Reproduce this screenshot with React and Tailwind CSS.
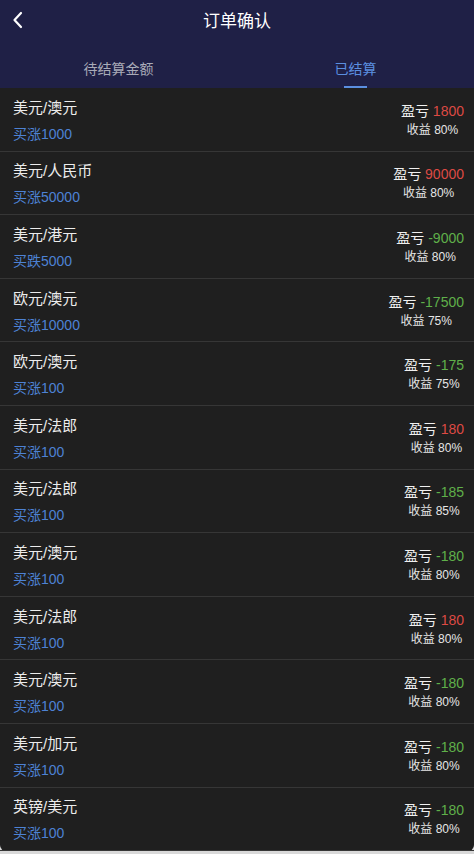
import React, { useState } from 'react';

const orders = [
  { pair: '美元/澳元', side: '买涨1000', pnl: '1800', rate: '80%' },
  { pair: '美元/人民币', side: '买涨50000', pnl: '90000', rate: '80%' },
  { pair: '美元/港元', side: '买跌5000', pnl: '-9000', rate: '80%' },
  { pair: '欧元/澳元', side: '买涨10000', pnl: '-17500', rate: '75%' },
  { pair: '欧元/澳元', side: '买涨100', pnl: '-175', rate: '75%' },
  { pair: '美元/法郎', side: '买涨100', pnl: '180', rate: '80%' },
  { pair: '美元/法郎', side: '买涨100', pnl: '-185', rate: '85%' },
  { pair: '美元/澳元', side: '买涨100', pnl: '-180', rate: '80%' },
  { pair: '美元/法郎', side: '买涨100', pnl: '180', rate: '80%' },
  { pair: '美元/澳元', side: '买涨100', pnl: '-180', rate: '80%' },
  { pair: '美元/加元', side: '买涨100', pnl: '-180', rate: '80%' },
  { pair: '英镑/美元', side: '买涨100', pnl: '-180', rate: '80%' },
];

const OrderRow = ({ order }) => {
  const loss = order.pnl.startsWith('-');
  return (
    <li className="h-[63.6px] flex items-center justify-between pl-[13px] pr-[10px] border-b border-[#363636]">
      <div className="flex flex-col gap-[5px] pt-[2px]">
        <span className="text-[15px] leading-[22px] text-[#ececec]">{order.pair}</span>
        <span className="text-[14px] leading-[20px] text-[#4d82d4]">{order.side}</span>
      </div>
      <div className="flex flex-col items-center pt-[1px]">
        <span className="text-[14px] leading-[20px] text-[#f0f0f0]">
          盈亏 <span className={loss ? 'text-[#5fb04a]' : 'text-[#dd4a44]'}>{order.pnl}</span>
        </span>
        <span className="text-[12px] leading-[18px] text-[#e6e6e6]">收益 {order.rate}</span>
      </div>
    </li>
  );
};

export default function App() {
  const [tab, setTab] = useState(1);
  const tabs = ['待结算金额', '已结算'];

  return (
    <div
      className="w-[474px] h-[854px] bg-[#d9d9d9] overflow-hidden"
      style={{ fontFamily: '"Liberation Sans", "Noto Sans CJK SC", sans-serif' }}
    >
      <div className="bg-[#1f2046]">
        <div className="relative h-[40px] pt-[4px] flex items-center justify-center">
          <button className="absolute left-[10px] top-[10px] text-white">
            <svg width="18" height="20" viewBox="0 0 18 20" fill="none" stroke="currentColor" strokeWidth="2.2" strokeLinecap="round" strokeLinejoin="round">
              <path d="M11 3 L4.5 10 L11 17" />
            </svg>
          </button>
          <h1 className="text-[17px] text-white">订单确认</h1>
        </div>
        <div className="h-[48px] flex">
          {tabs.map((t, i) => (
            <button
              key={t}
              onClick={() => setTab(i)}
              className="flex-1 flex flex-col items-center justify-end"
            >
              <span className={`text-[14px] leading-[20px] ${tab === i ? 'text-[#5b8fe0]' : 'text-[#a9abb8]'}`}>{t}</span>
              <span className={`mt-[7px] h-[2px] w-[23px] ${tab === i ? 'bg-[#5b8fe0]' : 'bg-transparent'}`} />
            </button>
          ))}
        </div>
      </div>
      <ul className="bg-[#1f1f1f] rounded-b-[6px]">
        {orders.map((o, i) => (
          <OrderRow key={i} order={o} />
        ))}
      </ul>
    </div>
  );
}
